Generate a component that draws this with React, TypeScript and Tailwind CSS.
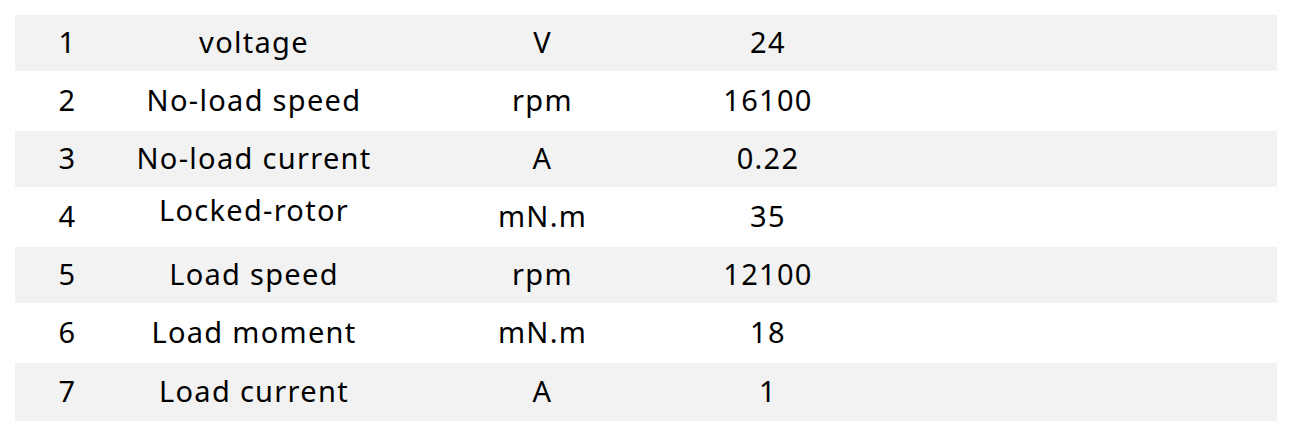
import React from 'react';

type Row = { no: string; name: string; unit: string; value: string; lift?: boolean };

const rows: Row[] = [
    { no: '1', name: 'voltage', unit: 'V', value: '24' },
    { no: '2', name: 'No-load speed', unit: 'rpm', value: '16100' },
    { no: '3', name: 'No-load current', unit: 'A', value: '0.22' },
    { no: '4', name: 'Locked-rotor', unit: 'mN.m', value: '35', lift: true },
    { no: '5', name: 'Load speed', unit: 'rpm', value: '12100' },
    { no: '6', name: 'Load moment', unit: 'mN.m', value: '18' },
    { no: '7', name: 'Load current', unit: 'A', value: '1' },
];

export default function App() {
    return (
        <div
            className="w-[1292px] h-[436px] bg-white pt-[15px] px-[15px] text-black"
            style={{ fontFamily: '"Noto Sans", "Open Sans", sans-serif' }}
        >
            <div className="flex flex-col w-[1262px]">
                {rows.map((r, idx) => {
                    const gray = idx % 2 === 0;
                    const height = gray ? (idx === rows.length - 1 ? 'h-[58px]' : 'h-[56px]') : 'h-[60px]';
                    return (
                        <div
                            key={r.no}
                            className={`flex items-center pb-[3px] text-[29px] leading-none tracking-[1.3px] ${height} ${gray ? 'bg-[#f2f2f2]' : 'bg-white'}`}
                        >
                            <div className="w-[105px] text-center">{r.no}</div>
                            <div className={`w-[268px] text-center whitespace-nowrap ${r.lift ? 'pb-[13px]' : ''}`}>{r.name}</div>
                            <div className="w-[309px] text-center">{r.unit}</div>
                            <div className="w-[142px] text-center">{r.value}</div>
                            <div className="flex-1" />
                        </div>
                    );
                })}
            </div>
        </div>
    );
}
